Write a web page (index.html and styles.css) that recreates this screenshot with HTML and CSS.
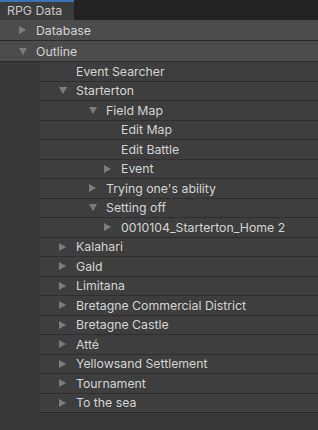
FILE: index.html
```html
<!DOCTYPE html>
<html lang="en">
  <head>
    <meta charset="UTF-8" />
    <meta name="viewport" content="width=device-width, initial-scale=1.0" />
    <title>RPG Data</title>
    <link rel="stylesheet" href="styles.css">
  </head>
  <body>
    <div class="panel">
      <!-- 탭 -->
      <div class="tabbar">
        <div class="tab">RPG Data</div>
      </div>

      <div class="tree">
        <div class="row top">
          <span class="arrow"><svg width="9" height="10" viewBox="0 0 9 10"><polygon points="1,1 8,5 1,9" /></svg></span>
          <span class="label">Database</span>
        </div>
        <div class="row top">
          <span class="arrow"><svg width="10" height="9" viewBox="0 0 10 9"><polygon points="1,1 9,1 5,8" /></svg></span>
          <span class="label">Outline</span>
        </div>

        <div class="children">
          <div class="row d1">
            <span class="arrow"></span>
            <span class="label">Event Searcher</span>
          </div>
          <div class="row d1">
            <span class="arrow"><svg width="10" height="9" viewBox="0 0 10 9"><polygon points="1,1 9,1 5,8" /></svg></span>
            <span class="label">Starterton</span>
          </div>
          <div class="row d2">
            <span class="arrow"><svg width="10" height="9" viewBox="0 0 10 9"><polygon points="1,1 9,1 5,8" /></svg></span>
            <span class="label">Field Map</span>
          </div>
          <div class="row d3">
            <span class="arrow"></span>
            <span class="label">Edit Map</span>
          </div>
          <div class="row d3">
            <span class="arrow"></span>
            <span class="label">Edit Battle</span>
          </div>
          <div class="row d3">
            <span class="arrow"><svg width="9" height="10" viewBox="0 0 9 10"><polygon points="1,1 8,5 1,9" /></svg></span>
            <span class="label">Event</span>
          </div>
          <div class="row d2">
            <span class="arrow"><svg width="9" height="10" viewBox="0 0 9 10"><polygon points="1,1 8,5 1,9" /></svg></span>
            <span class="label">Trying one's ability</span>
          </div>
          <div class="row d2">
            <span class="arrow"><svg width="10" height="9" viewBox="0 0 10 9"><polygon points="1,1 9,1 5,8" /></svg></span>
            <span class="label">Setting off</span>
          </div>
          <div class="row d3">
            <span class="arrow"><svg width="9" height="10" viewBox="0 0 9 10"><polygon points="1,1 8,5 1,9" /></svg></span>
            <span class="label">0010104_Starterton_Home 2</span>
          </div>
          <div class="row d1">
            <span class="arrow"><svg width="9" height="10" viewBox="0 0 9 10"><polygon points="1,1 8,5 1,9" /></svg></span>
            <span class="label">Kalahari</span>
          </div>
          <div class="row d1">
            <span class="arrow"><svg width="9" height="10" viewBox="0 0 9 10"><polygon points="1,1 8,5 1,9" /></svg></span>
            <span class="label">Gald</span>
          </div>
          <div class="row d1">
            <span class="arrow"><svg width="9" height="10" viewBox="0 0 9 10"><polygon points="1,1 8,5 1,9" /></svg></span>
            <span class="label">Limitana</span>
          </div>
          <div class="row d1">
            <span class="arrow"><svg width="9" height="10" viewBox="0 0 9 10"><polygon points="1,1 8,5 1,9" /></svg></span>
            <span class="label">Bretagne Commercial District</span>
          </div>
          <div class="row d1">
            <span class="arrow"><svg width="9" height="10" viewBox="0 0 9 10"><polygon points="1,1 8,5 1,9" /></svg></span>
            <span class="label">Bretagne Castle</span>
          </div>
          <div class="row d1">
            <span class="arrow"><svg width="9" height="10" viewBox="0 0 9 10"><polygon points="1,1 8,5 1,9" /></svg></span>
            <span class="label">Atté</span>
          </div>
          <div class="row d1">
            <span class="arrow"><svg width="9" height="10" viewBox="0 0 9 10"><polygon points="1,1 8,5 1,9" /></svg></span>
            <span class="label">Yellowsand Settlement</span>
          </div>
          <div class="row d1">
            <span class="arrow"><svg width="9" height="10" viewBox="0 0 9 10"><polygon points="1,1 8,5 1,9" /></svg></span>
            <span class="label">Tournament</span>
          </div>
          <div class="row d1">
            <span class="arrow"><svg width="9" height="10" viewBox="0 0 9 10"><polygon points="1,1 8,5 1,9" /></svg></span>
            <span class="label">To the sea</span>
          </div>
        </div>
      </div>
    </div>
  </body>
</html>
```

FILE: styles.css
```css
body {
  margin: 0;
  background-color: #383838;
  font-family: Inter, "Noto Sans", sans-serif;
  font-size: 12.3px;
  color: #d4d4d4;
}

.panel {
  width: 318px;
  height: 430px;
  background-color: #383838;
  overflow: hidden;
}

.tabbar {
  height: 20px;
  background-color: #232323;
  display: flex;
}

.tab {
  width: 74px;
  box-sizing: border-box;
  padding-left: 7px;
  background-color: #3c3c3c;
  border-top: 2px solid #3b74b3;
  line-height: 18px;
  color: #c8c8c8;
}

.row {
  display: flex;
  align-items: center;
  height: 18.5px;
  border-bottom: 1px solid #2f2f2f;
  background-color: #3e3e3e;
  white-space: nowrap;
}

.row.top {
  height: 20px;
  padding-left: 18px;
  background-color: #4c4c4c;
  border-bottom: 1px solid #2b2b2b;
}

.arrow {
  width: 18px;
  height: 10px;
  display: flex;
  align-items: center;
  flex-shrink: 0;
}

.arrow svg {
  fill: #7c7c7c;
}

.children {
  margin-left: 40px;
}

.d1 {
  padding-left: 18px;
}

.d2 {
  padding-left: 48px;
}

.d3 {
  padding-left: 63px;
}
```
